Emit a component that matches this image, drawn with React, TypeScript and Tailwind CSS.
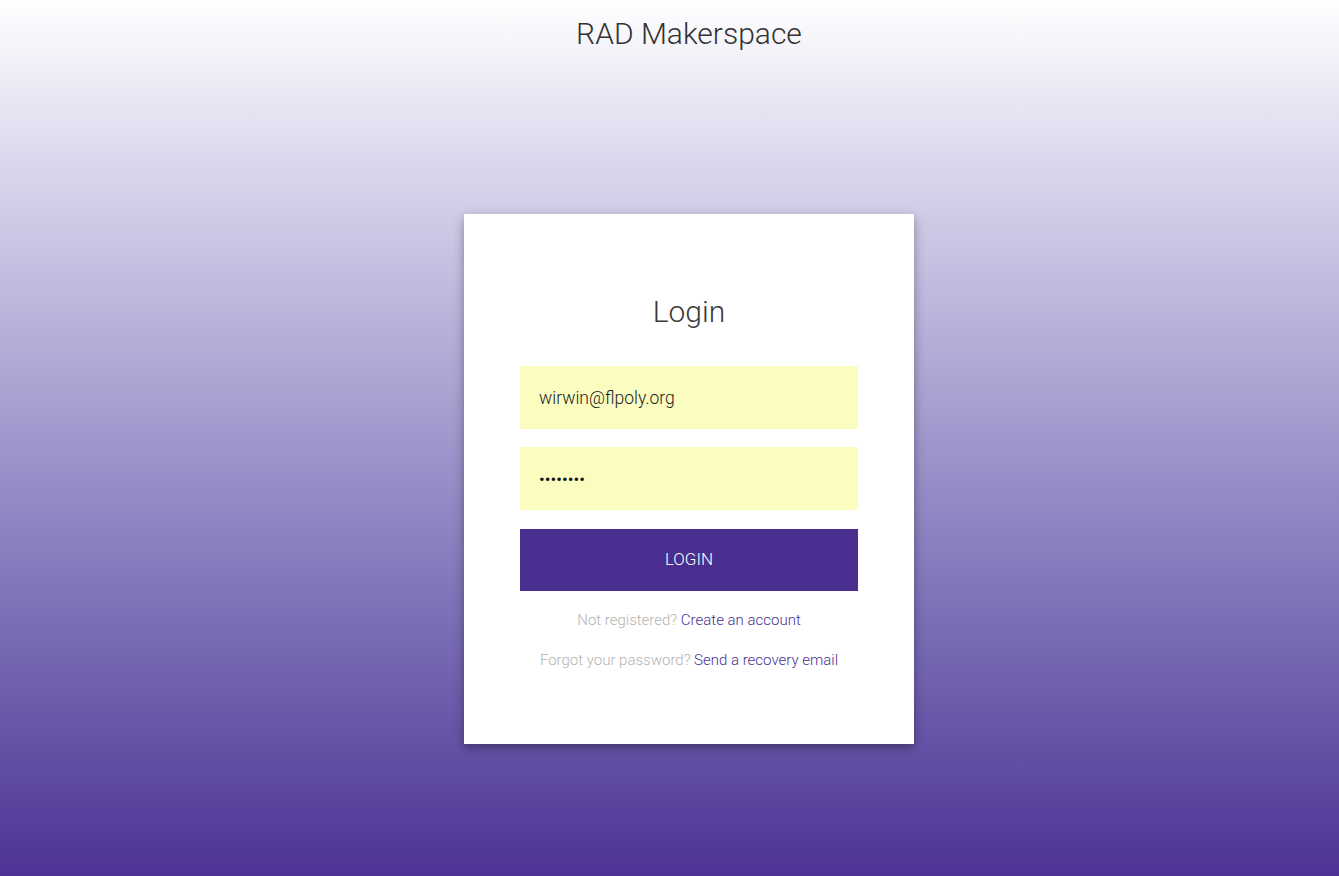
import React from "react";

export default function App() {
  return (
    <div
      className="w-full h-[876px] pl-[39px] flex flex-col items-center bg-gradient-to-b from-[#ffffff] to-[#4e3294]"
      style={{ fontFamily: "Roboto, 'Noto Sans', sans-serif" }}
    >
      <h1 className="pt-[14px] text-[30px] leading-[40px] font-light text-[#333333]">
        RAD Makerspace
      </h1>
      <div className="mt-[160px] w-[450px] h-[530px] bg-white shadow-[0_4px_10px_rgba(0,0,0,0.35)] px-[56px] pt-[78px] flex flex-col">
        <h2 className="text-center text-[30px] leading-[40px] font-light text-[#3a3a3a]">
          Login
        </h2>
        <input
          readOnly
          value="wirwin@flpoly.org"
          className="mt-[34px] h-[63px] w-full bg-[#fafdbf] px-[19px] text-[17.5px] font-light text-[#222] outline-none"
        />
        <input
          readOnly
          type="password"
          value="12345678"
          className="mt-[18px] h-[63px] w-full bg-[#fafdbf] px-[19px] text-[17px] text-[#111] outline-none"
        />
        <button className="mt-[19px] h-[62px] w-full bg-[#4a2f91] text-white text-[17px] font-light uppercase">
          Login
        </button>
        <p className="mt-[19px] text-center text-[15px] leading-[20px] font-light text-[#b3b3b3]">
          Not registered? <span className="text-[#4a2f91]">Create an account</span>
        </p>
        <p className="mt-[20px] text-center text-[15px] leading-[20px] font-light text-[#b3b3b3]">
          Forgot your password? <span className="text-[#4a2f91]">Send a recovery email</span>
        </p>
      </div>
    </div>
  );
}
